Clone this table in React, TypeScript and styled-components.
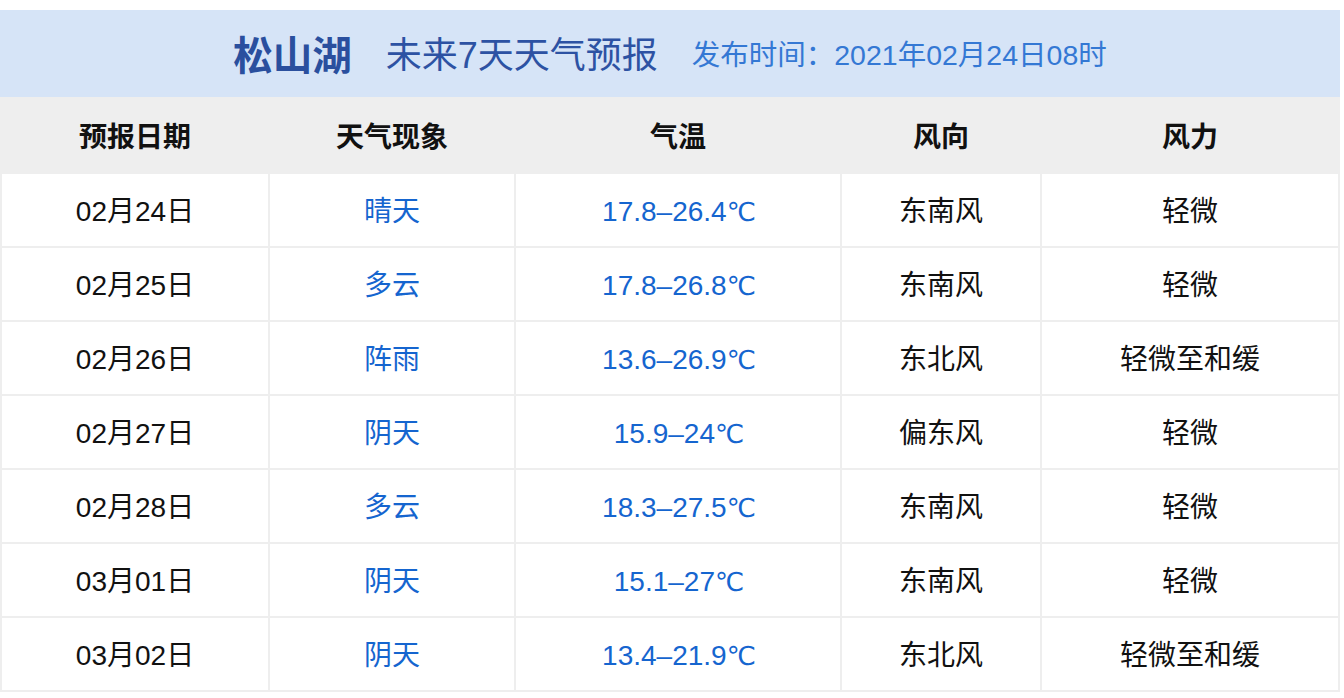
import styled, { createGlobalStyle } from 'styled-components';

const GlobalStyle = createGlobalStyle`
  html, body {
    margin: 0;
    padding: 0;
    background: #ffffff;
  }
  body {
    font-family: "Liberation Sans", "Noto Sans CJK SC", sans-serif;
  }
`;

const Page = styled.div`
  padding-top: 10px;
  width: 1344px;
`;

const TitleBar = styled.div`
  height: 87px;
  background: #d6e4f7;
  display: flex;
  align-items: center;
  justify-content: center;
  width: 1340px;
  gap: 34px;
  padding-bottom: 3px;
  box-sizing: border-box;
`;

const Place = styled.span`
  font-size: 39.5px;
  font-weight: 700;
  color: #2a4f9e;
`;

const Subtitle = styled.span`
  font-size: 36px;
  color: #2d52a3;
`;

const PublishTime = styled.span`
  font-size: 28.5px;
  color: #3478d4;
`;

const Table = styled.table`
  width: 1340px;
  border-collapse: separate;
  border-spacing: 2px;
  background: #eeeeee;
  table-layout: fixed;
`;

const HeadCell = styled.th<{ $w: number }>`
  width: ${(p) => p.$w}px;
  height: 71px;
  padding: 0 0 2px;
  background: #eeeeee;
  font-size: 28px;
  font-weight: 700;
  color: #111111;
  text-align: center;
  vertical-align: middle;
`;

const Row = styled.tr`
  height: 72px;
`;

const Cell = styled.td<{ $blue?: boolean }>`
  height: 69px;
  padding: 3px 0 0;
  background: #ffffff;
  font-size: 28px;
  line-height: 40px;
  color: ${(p) => (p.$blue ? '#1565cf' : '#111111')};
  text-align: center;
  vertical-align: middle;
`;

// ℃ as one compact glyph, as in the reference
const Unit = styled.span`
  font-family: "DejaVu Sans", "Noto Sans CJK SC", sans-serif;
  font-size: 26px;
  line-height: 1;
  letter-spacing: -2px;
`;

const columns = [
  { title: '预报日期', width: 266 },
  { title: '天气现象', width: 244 },
  { title: '气温', width: 324 },
  { title: '风向', width: 198 },
  { title: '风力', width: 296 },
];

const forecast = [
  { date: '02月24日', weather: '晴天', temp: '17.8–26.4', dir: '东南风', force: '轻微' },
  { date: '02月25日', weather: '多云', temp: '17.8–26.8', dir: '东南风', force: '轻微' },
  { date: '02月26日', weather: '阵雨', temp: '13.6–26.9', dir: '东北风', force: '轻微至和缓' },
  { date: '02月27日', weather: '阴天', temp: '15.9–24', dir: '偏东风', force: '轻微' },
  { date: '02月28日', weather: '多云', temp: '18.3–27.5', dir: '东南风', force: '轻微' },
  { date: '03月01日', weather: '阴天', temp: '15.1–27', dir: '东南风', force: '轻微' },
  { date: '03月02日', weather: '阴天', temp: '13.4–21.9', dir: '东北风', force: '轻微至和缓' },
];

export default function App() {
  return (
    <Page>
      <GlobalStyle />
      <TitleBar>
        <Place>松山湖</Place>
        <Subtitle>未来7天天气预报</Subtitle>
        <PublishTime>发布时间：2021年02月24日08时</PublishTime>
      </TitleBar>
      <Table>
        <thead>
          <tr>
            {columns.map((c) => (
              <HeadCell key={c.title} $w={c.width}>
                {c.title}
              </HeadCell>
            ))}
          </tr>
        </thead>
        <tbody>
          {forecast.map((d) => (
            <Row key={d.date}>
              <Cell>{d.date}</Cell>
              <Cell $blue>{d.weather}</Cell>
              <Cell $blue>
                {d.temp}
                <Unit>℃</Unit>
              </Cell>
              <Cell>{d.dir}</Cell>
              <Cell>{d.force}</Cell>
            </Row>
          ))}
        </tbody>
      </Table>
    </Page>
  );
}
